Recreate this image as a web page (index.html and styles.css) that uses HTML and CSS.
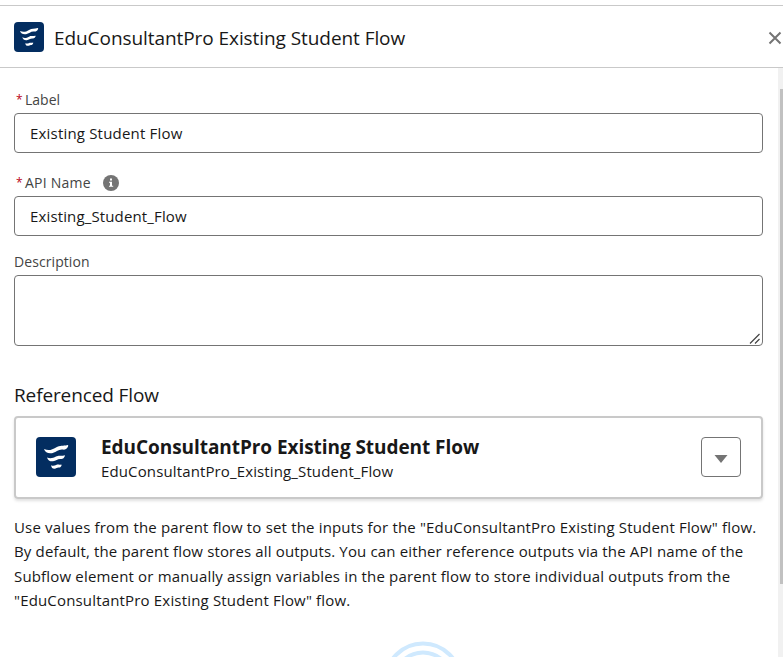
FILE: index.html
```
<!DOCTYPE html>
<html lang="en">
<head>
<meta charset="utf-8">
<title>EduConsultantPro Existing Student Flow</title>
<link rel="stylesheet" href="styles.css">
</head>
<body>
<svg class="defs" aria-hidden="true">
  <symbol id="subflow" viewBox="0 0 40 40">
    <path d="M8 12C12.500 14 16 13 20 10.500C24 8.200 27 9.300 31.500 8C32.500 7.900 32.400 9 31.800 10C30.500 12.200 29 13 26.500 12.600C22.500 12.200 20 15.400 16 16.200C12 16.800 9.300 15.500 8 12Z"/>
    <path d="M11 20.400C14.500 21.900 17 21 20 19.500C23 17.900 25 19.300 28 18.400C29 18.200 29 19 28.500 19.800C27.500 21.600 26.500 22.200 24.500 21.900C21.500 21.800 20 23.800 17 24.300C14 24.600 12 23.400 11 20.400Z"/>
    <path d="M15 28.200C17 29.100 18.500 28.700 20.200 27.900C22 27.100 23.200 28.100 25 27.500C25.800 27.400 25.700 28.200 25.300 29C24.500 30.500 23.800 30.700 22.500 30.600C21 30.600 20.300 31.700 18.500 31.800C16.500 31.900 15.500 30.600 15 28.200Z"/>
  </symbol>
</svg>
<div class="panel">
  <header class="header">
    <svg class="icon icon-small"><use href="#subflow"/></svg>
    <h1 class="title"><span>EduConsultantPro Existing Student Flow</span></h1>
    <svg class="close" viewBox="0 0 14 14"><path d="M1.500 1.500L12.500 12.500M12.500 1.500L1.500 12.500"/></svg>
  </header>
  <div class="content">
    <main class="form">
      <div class="label required"><span class="star">*</span><span>Label</span></div>
      <div class="field">Existing Student Flow</div>
      <div class="label required api"><span class="star">*</span><span class="label-api">API Name</span>
        <svg class="info" viewBox="0 0 16 16"><circle cx="8" cy="8" r="8"/><path d="M7 3.500h2v2H7zM6 6.800h3v4h1.200v1H6v-1h1v-3H6z"/></svg>
      </div>
      <div class="field field-api">Existing_Student_Flow</div>
      <div class="label description">Description</div>
      <div class="field area"><svg class="grip" viewBox="0 0 12 12"><path d="M1 10.500L10.500 1M6 10.500L10.500 6"/></svg></div>
      <h2 class="section">Referenced Flow</h2>
      <section class="card">
        <svg class="icon icon-large"><use href="#subflow"/></svg>
        <div class="names">
          <div class="name">EduConsultantPro Existing Student Flow</div>
          <div class="api-name">EduConsultantPro_Existing_Student_Flow</div>
        </div>
        <div class="menu"><svg viewBox="0 0 14 8"><path d="M.5 0h13L7 8z"/></svg></div>
      </section>
      <p class="help">Use values from the parent flow to set the inputs for the "EduConsultantPro Existing Student Flow" flow.<br><span class="tight">By default, the parent flow stores all outputs. You can either reference outputs via the API name of the</span><br>Subflow element or manually assign variables in the parent flow to store individual outputs from the<br>"EduConsultantPro Existing Student Flow" flow.</p>
      <svg class="rings" viewBox="0 0 80 80"><circle cx="40" cy="40" r="37.500"/><circle cx="40" cy="40" r="28.500"/></svg>
    </main>
    <div class="track"><div class="thumb"></div></div>
  </div>
</div>
</body>
</html>
```
FILE: styles.css
```
* { box-sizing: border-box; }
body { margin: 0; background: #fff; color: #181818; font-family: "Open Sans", "Noto Sans", sans-serif; font-size: 15px; overflow: hidden; }
.defs { display: block; width: 0; height: 0; }
.panel { height: 657px; padding-top: 5px; display: flex; flex-direction: column; overflow: hidden; }
.header { flex: none; height: 63px; border-top: 1px solid #c9c9c9; border-bottom: 1px solid #c9c9c9; display: flex; align-items: center; padding: 0 1px 0 14px; }
.icon { flex: none; background: #032d60; fill: #fff; border-radius: 4px; }
.icon-small { width: 30px; height: 30px; }
.icon-large { width: 40px; height: 40px; }
.title { flex: 1; margin: 2px 0 0 10px; font-size: 19px; font-weight: 400; line-height: 30px; letter-spacing: -.07px; white-space: nowrap; }
.close { width: 14px; height: 14px; margin-top: 2px; fill: none; stroke: #747474; stroke-width: 2; }
.content { flex: 1; min-height: 0; display: flex; }
.form { flex: 1; min-width: 0; padding: 22px 15px 0 14px; overflow: hidden; }
.label { height: 20px; line-height: 20px; font-size: 14px; color: #444; display: flex; align-items: center; white-space: nowrap; }
.label-api { letter-spacing: .22px; }
.star { width: 9px; font-size: 12px; color: #ba0517; }
.required { padding-left: 2px; }
.field { height: 40px; margin-top: 3px; border: 1px solid #747474; border-radius: 4px; padding: 0 15px; line-height: 39px; letter-spacing: .19px; white-space: nowrap; }
.field-api { letter-spacing: .14px; }
.api { margin-top: 20px; }
.info { width: 16px; height: 16px; margin-left: 12px; fill: #747474; }
.info path { fill: #fff; }
.description { margin-top: 16px; letter-spacing: .08px; }
.area { height: 71px; display: flex; justify-content: flex-end; align-items: flex-end; padding: 0 1px 0 0; }
.grip { width: 12px; height: 12px; fill: none; stroke: #444; stroke-width: 1.2; }
.section { margin: 35px 0 0; font-size: 19px; font-weight: 400; line-height: 28px; letter-spacing: -.12px; white-space: nowrap; }
.card { height: 83px; margin-top: 7px; border: 2px solid #c9c9c9; border-radius: 4px; box-shadow: 0 2px 3px rgba(0,0,0,.12); display: flex; align-items: center; padding: 0 20px 1px; }
.names { flex: 1; margin-left: 25px; padding-top: 2px; white-space: nowrap; }
.name { font-size: 19px; font-weight: 700; line-height: 26px; letter-spacing: -.06px; }
.api-name { line-height: 22px; letter-spacing: .13px; }
.menu { width: 40px; height: 40px; border: 1px solid #747474; border-radius: 4px; display: grid; place-items: center; padding-top: 3px; }
.menu svg { width: 14px; height: 8px; fill: #747474; }
.help { margin: 16px 0 0; line-height: 24.400px; letter-spacing: .17px; white-space: nowrap; }
.tight { letter-spacing: .15px; }
.rings { display: block; width: 80px; height: 80px; margin: 28px 0 0 369px; fill: none; stroke: #cfe9fe; stroke-width: 4; }
.track { width: 5px; background: #f1f1f1; display: flex; justify-content: flex-end; padding-top: 21px; }
.thumb { width: 3px; height: 495px; background: #c1c1c1; }
```
